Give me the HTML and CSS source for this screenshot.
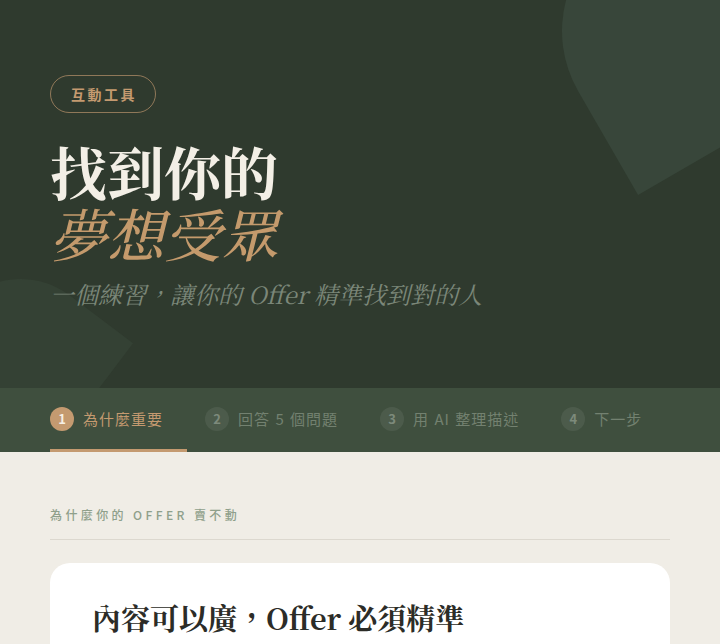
FILE: index.html
```html
<!DOCTYPE html>
<html lang="zh-Hant">
<head>
<meta charset="utf-8">
<title>找到你的夢想受眾</title>
<link rel="stylesheet" href="styles.css">
</head>
<body>
<header class="hero">
  <div class="shape shape-top"></div>
  <div class="shape shape-bottom"></div>
  <div class="hero-inner">
    <span class="badge">互動工具</span>
    <h1 class="title">
      <span class="title-line">找到你的</span>
      <em class="title-line title-accent">夢想受眾</em>
    </h1>
    <p class="subtitle">一個練習，讓你的 Offer 精準找到對的人</p>
  </div>
</header>
<nav class="tabs">
  <div class="tab active"><span class="num">1</span><span class="label">為什麼重要</span></div>
  <div class="tab"><span class="num">2</span><span class="label">回答 5 個問題</span></div>
  <div class="tab"><span class="num">3</span><span class="label">用 AI 整理描述</span></div>
  <div class="tab"><span class="num">4</span><span class="label">下一步</span></div>
</nav>
<main class="content">
  <div class="section-label">為什麼你的 OFFER 賣不動</div>
  <hr class="divider">
  <section class="card">
    <h2 class="card-title">內容可以廣，Offer 必須精準</h2>
  </section>
</main>
</body>
</html>
```

FILE: styles.css
```css
html {
  overflow: hidden;
}
body {
  margin: 0;
  background: #f0ede6;
  font-family: "Noto Sans CJK TC", "Noto Sans", sans-serif;
}
.hero {
  position: relative;
  overflow: hidden;
  background: #2f3a2e;
  height: 388px;
  box-sizing: border-box;
  padding: 75px 50px 0;
}
.shape {
  position: absolute;
  background: #38463a;
  border-radius: 50% 50% 0 50%;
}
.shape-top {
  width: 240px;
  height: 240px;
  left: 562px;
  top: -89px;
  transform: rotate(60deg);
}
.shape-bottom {
  width: 160px;
  height: 160px;
  left: -59px;
  top: 279px;
  transform: rotate(-53deg);
  background: #344134;
}
.hero-inner {
  position: relative;
}
.badge {
  display: inline-block;
  border: 1px solid rgba(196, 154, 112, 0.65);
  border-radius: 20px;
  padding: 8px 18px 8px 20px;
  color: #c49a70;
  font-size: 14px;
  line-height: 20px;
  font-weight: 700;
  letter-spacing: 2.5px;
}
.title {
  margin: 26px 0 0;
  font-family: "Noto Serif CJK TC", "Liberation Serif", "Noto Sans CJK TC", serif;
  font-size: 57px;
  line-height: 62px;
  font-weight: 700;
  color: #f3efe6;
}
.title-line {
  display: block;
}
.title-accent {
  font-style: italic;
  font-weight: 500;
  color: #c49a6c;
}
.subtitle {
  margin: 14px 0 0;
  font-family: "Noto Serif CJK TC", "Liberation Serif", "Noto Sans CJK TC", serif;
  font-style: italic;
  font-size: 24px;
  line-height: 34px;
  color: #7b8779;
}
.tabs {
  display: flex;
  gap: 18px;
  height: 64px;
  padding: 0 50px;
  background: #3f4f3e;
}
.tab {
  flex: none;
  display: flex;
  align-items: center;
  gap: 9px;
  padding-right: 24px;
  box-sizing: border-box;
  border-bottom: 3px solid transparent;
  color: #738170;
  font-size: 15px;
  letter-spacing: 1px;
  word-spacing: 1px;
  white-space: nowrap;
}
.tab .num {
  flex: none;
  width: 24px;
  height: 24px;
  border-radius: 50%;
  display: flex;
  align-items: center;
  justify-content: center;
  background: rgba(255, 255, 255, 0.07);
  color: #7d8a7b;
  font-size: 13px;
  font-weight: 700;
  letter-spacing: 0;
}
.tab.active {
  border-bottom-color: #c49a70;
  color: #c49a70;
}
.tab.active .num {
  background: #c49a70;
  color: #f6efe4;
}
.content {
  padding: 54px 50px 0;
}
.section-label {
  font-size: 12px;
  line-height: 18px;
  letter-spacing: 3.4px;
  color: #8fa08b;
  font-weight: 500;
}
.divider {
  border: 0;
  border-top: 1px solid #dcd8cf;
  margin: 15px 0 23px;
}
.card {
  background: #ffffff;
  border-radius: 20px;
  padding: 35px 42px 60px;
}
.card-title {
  margin: 0;
  font-family: "Noto Serif CJK TC", "Liberation Serif", "Noto Sans CJK TC", serif;
  font-size: 29px;
  line-height: 40px;
  font-weight: 700;
  color: #2c2c27;
}
```
